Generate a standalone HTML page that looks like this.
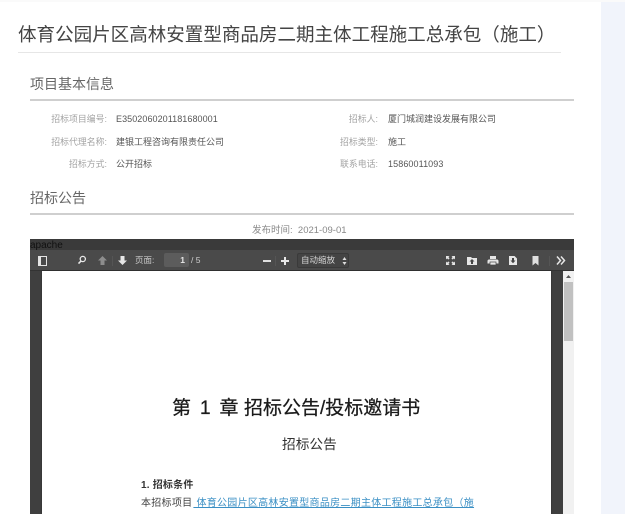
<!DOCTYPE html>
<html lang="zh-CN">
<head>
<meta charset="utf-8">
<style>
html,body{margin:0;padding:0;width:625px;height:514px;overflow:hidden;background:#fff}
body{font-family:"Liberation Sans","Noto Sans CJK SC",sans-serif;position:relative}
#w{position:absolute;left:0;top:0;width:625px;height:514px;filter:blur(.3px)}
.a{position:absolute;white-space:nowrap;line-height:1}
.l{color:#a3a3a3;font-size:9px;text-align:right}
.v{color:#555;font-size:9px}
.sec{color:#666;font-size:14px}
.ic{position:absolute}
.h{font-size:19px;color:#1a1a1a;-webkit-text-stroke:.25px #1a1a1a;top:398.500px}
</style>
</head>
<body>
<div id="w">
<div class="a" style="left:0;top:0;width:625px;height:2px;background:#fafafa"></div>
<div class="a" style="left:601px;top:2px;width:24px;height:512px;background:#f1f4fb"></div>

<div class="a" style="left:18px;top:26px;font-size:18.550px;color:#444">体育公园片区高林安置型商品房二期主体工程施工总承包（施工）</div>
<div class="a" style="left:18px;top:52px;width:543px;height:1px;background:#e6e6e6"></div>

<div class="a sec" style="left:30px;top:77px">项目基本信息</div>
<div class="a" style="left:30px;top:99px;width:544px;height:2px;background:#cfcfcf"></div>

<div class="a l" style="left:30px;width:77px;top:114.500px;font-size:8.900px">招标项目编号:</div>
<div class="a v" style="left:116px;top:114.500px;letter-spacing:.07px">E3502060201181680001</div>
<div class="a l" style="left:30px;width:77px;top:137.500px;font-size:8.900px">招标代理名称:</div>
<div class="a v" style="left:116px;top:137.500px">建银工程咨询有限责任公司</div>
<div class="a l" style="left:30px;width:77px;top:159.500px;font-size:8.900px">招标方式:</div>
<div class="a v" style="left:116px;top:159.500px">公开招标</div>

<div class="a l" style="left:300px;width:78px;top:114.500px;font-size:8.900px">招标人:</div>
<div class="a v" style="left:388px;top:114.500px">厦门城润建设发展有限公司</div>
<div class="a l" style="left:300px;width:78px;top:137.500px;font-size:8.900px">招标类型:</div>
<div class="a v" style="left:388px;top:137.500px">施工</div>
<div class="a l" style="left:300px;width:78px;top:159.500px;font-size:8.900px">联系电话:</div>
<div class="a v" style="left:388px;top:159.500px;letter-spacing:.1px">15860011093</div>

<div class="a sec" style="left:30px;top:191px">招标公告</div>
<div class="a" style="left:30px;top:213px;width:544px;height:2px;background:#cfcfcf"></div>

<div class="a" style="left:252px;top:226px;font-size:9.500px;color:#888">发布时间:&nbsp; 2021-09-01</div>

<!-- viewer -->
<div class="a" style="left:30px;top:239px;width:544px;height:275px;background:#3f3f3f"></div>
<div class="a" style="left:30px;top:239px;width:544px;height:11px;background:#3a3a3a"></div>
<div class="a" style="left:30px;top:239.500px;font-size:10px;color:#111;line-height:11px">apache</div>
<div class="a" style="left:30px;top:250px;width:544px;height:21px;background:#4a4a4a;border-bottom:1px solid #333;box-sizing:border-box"></div>

<!-- sidebar toggle -->
<div class="ic" style="left:38px;top:256px;height:8px;border:1px solid #e4e4e4;border-left-width:3px;box-sizing:content-box;width:5px"></div>
<!-- search -->
<svg class="ic" style="left:77px;top:255px" width="10" height="10" viewBox="0 0 10 10"><circle cx="5.800" cy="4" r="2.600" fill="none" stroke="#e8e8e8" stroke-width="1.300"/><path d="M4 6 1.500 8.600" stroke="#e8e8e8" stroke-width="1.600"/></svg>
<!-- up / down -->
<svg class="ic" style="left:97px;top:255px" width="11" height="11" viewBox="0 0 11 11"><path d="M5.500 1 10 5.500H7.500V10h-4V5.500H1z" fill="#8d8d8d"/></svg>
<div class="a" style="left:112px;top:256px;width:1px;height:10px;background:#555"></div>
<svg class="ic" style="left:117px;top:255px" width="11" height="11" viewBox="0 0 11 11"><path d="M3.500 1h4v4.500H10L5.500 10 1 5.500H3.500z" fill="#e6e6e6"/></svg>
<div class="a" style="left:135px;top:256px;font-size:8.500px;color:#c8c8c8">页面:</div>
<div class="a" style="left:164px;top:253px;width:25px;height:14px;background:#5c5c5c;border-radius:2px;box-sizing:border-box;padding-right:4px;text-align:right;font-size:8.500px;line-height:14px;color:#e8e8e8;font-weight:bold">1</div>
<div class="a" style="left:191px;top:256px;font-size:8.500px;color:#d0d0d0">/ 5</div>

<!-- zoom -->
<div class="a" style="left:263px;top:260px;width:8px;height:2px;background:#e0e0e0"></div>
<div class="a" style="left:275px;top:256px;width:1px;height:10px;background:#555"></div>
<div class="a" style="left:281px;top:260px;width:8px;height:2px;background:#e8e8e8"></div>
<div class="a" style="left:284px;top:257px;width:2px;height:8px;background:#e8e8e8"></div>
<div class="a" style="left:297px;top:253px;width:52px;height:15px;background:#444;border:1px solid #3a3a3a;border-radius:2px;box-sizing:border-box"></div>
<div class="a" style="left:301px;top:256px;font-size:8.500px;color:#d8d8d8">自动缩放</div>
<svg class="ic" style="left:342px;top:257px" width="5" height="8" viewBox="0 0 5 8"><path d="M2.500 0 4.500 3H.5zM2.500 8 .5 5h4z" fill="#ddd"/></svg>

<!-- right tools -->
<svg class="ic" style="left:445px;top:255px" width="11" height="11" viewBox="0 0 11 11" fill="#e6e6e6"><path d="M1 1h3.500L3.400 2.100 4.600 3.300 3.300 4.600 2.100 3.400 1 4.500zM10 1v3.500L8.900 3.400 7.700 4.600 6.400 3.300 7.600 2.100 6.500 1zM1 10V6.500l1.100 1.100 1.200-1.200 1.300 1.300-1.200 1.200L4.500 10zM10 10H6.500l1.100-1.100-1.200-1.200 1.300-1.300 1.200 1.200L10 6.500z"/></svg>
<svg class="ic" style="left:466px;top:255px" width="12" height="11" viewBox="0 0 12 11"><path d="M1 2h4l1 1h5v7H1z" fill="#e6e6e6"/><path d="M6 4 8.500 6.500H7V9H5V6.500H3.500z" fill="#444"/></svg>
<svg class="ic" style="left:487px;top:255px" width="12" height="11" viewBox="0 0 12 11"><rect x="3" y="1" width="6" height="3" fill="#e6e6e6"/><path d="M1.500 4.500h9l1 1v3h-11v-3z" fill="#e6e6e6"/><rect x="3" y="7" width="6" height="3" fill="#e6e6e6" stroke="#444" stroke-width=".7"/></svg>
<svg class="ic" style="left:508px;top:255px" width="10" height="11" viewBox="0 0 10 11"><path d="M1 1h5.500L9 3.500V10H1z" fill="#e6e6e6"/><path d="M4 3h2v2.500h1.500L5 8.200 2.500 5.500H4z" fill="#444"/></svg>
<svg class="ic" style="left:532px;top:255px" width="7" height="11" viewBox="0 0 7 11"><path d="M.5 1h6v9.500L3.500 8 .5 10.500z" fill="#e0e0e0"/></svg>
<div class="a" style="left:549px;top:256px;width:1px;height:10px;background:#555"></div>
<svg class="ic" style="left:556px;top:256px" width="10" height="9" viewBox="0 0 10 9"><path d="M1 .5 4.500 4.500 1 8.500M5 .5 8.500 4.500 5 8.500" fill="none" stroke="#e6e6e6" stroke-width="1.500"/></svg>

<!-- page -->
<div class="a" style="left:42px;top:271px;width:509px;height:243px;background:#fff;box-shadow:0 0 1px #222"></div>

<!-- scrollbar -->
<div class="a" style="left:563px;top:271px;width:11px;height:243px;background:#f1f1f1"></div>
<svg class="ic" style="left:565px;top:274px" width="7" height="5" viewBox="0 0 7 5"><path d="M3.500 1 6 4H1z" fill="#555"/></svg>
<div class="a" style="left:564px;top:282px;width:9px;height:59px;background:#c1c1c1"></div>

<!-- pdf content -->
<div class="a h" style="left:172px">第</div>
<div class="a h" style="left:200px">1</div>
<div class="a h" style="left:219.500px">章</div>
<div class="a h" style="left:244px">招标公告/投标邀请书</div>
<div class="a" style="left:282px;top:437.500px;font-size:13.700px;color:#333">招标公告</div>
<div class="a" style="left:141px;top:481px;font-size:10px;color:#333;font-weight:bold;letter-spacing:.2px">1. 招标条件</div>
<div class="a" style="left:141px;top:499px;font-size:10px;color:#444;letter-spacing:.28px">本招标项目<span style="margin-left:1px;color:#3a8fc4;text-decoration:underline">&nbsp;体育公园片区高林安置型商品房二期主体工程施工总承包（施</span></div>
</div>
</body>
</html>
